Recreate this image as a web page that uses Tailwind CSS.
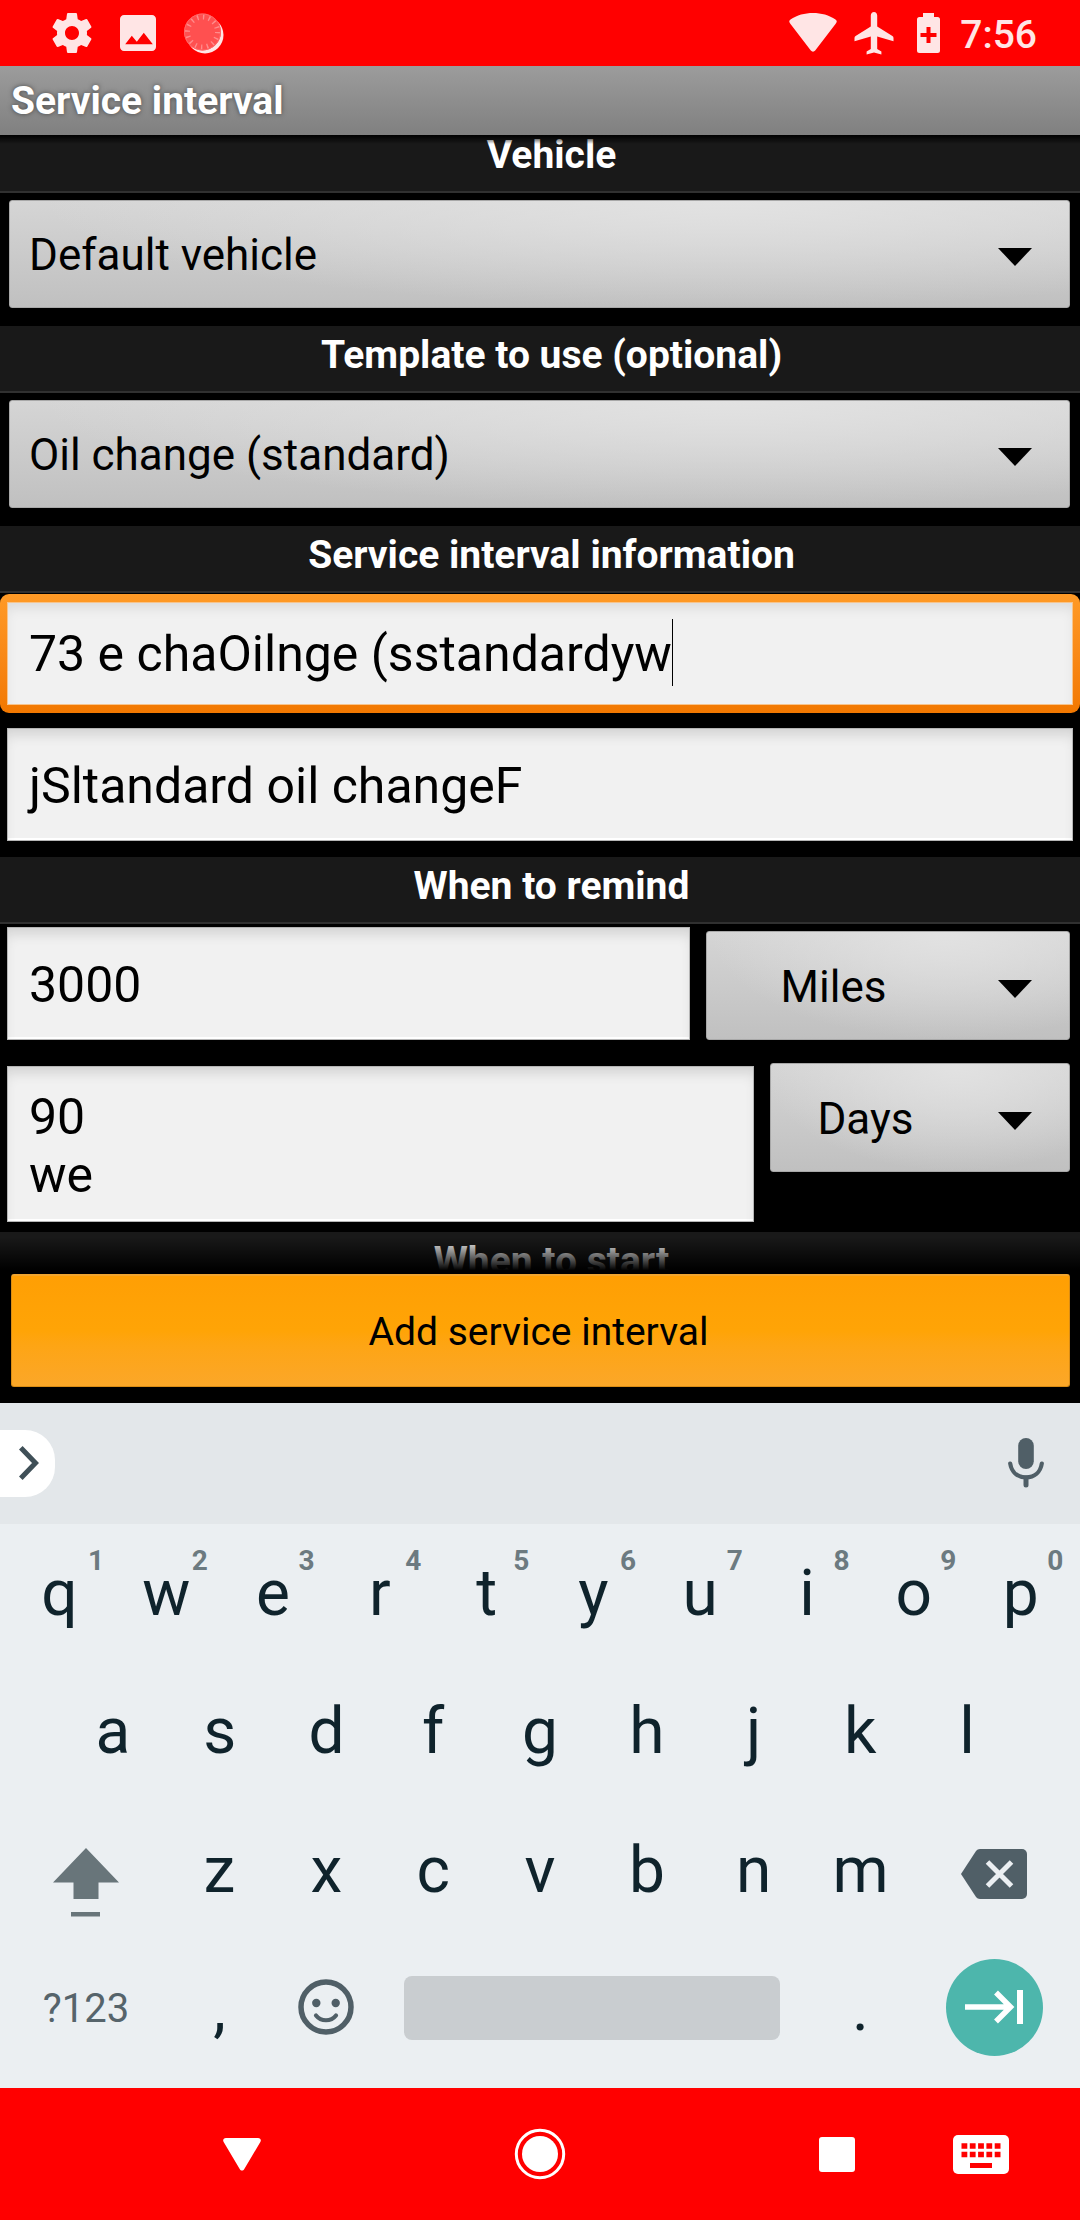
<!DOCTYPE html>
<html lang="en">
<head>
<meta charset="utf-8">
<title>Service interval</title>
<script src="https://cdn.jsdelivr.net/npm/@tailwindcss/browser@4"></script>
</head>
<body class="w-[1080px] h-[2220px] overflow-hidden bg-black font-[Roboto,sans-serif] flex flex-col">

<!-- Status bar -->
<header class="h-[66px] shrink-0 bg-[#ff0000] flex items-center text-[#ffe5e5]">
  <svg class="ml-[48px] w-12 h-12 shrink-0" viewBox="0 0 24 24" fill="currentColor"><path d="M19.43 12.98c.04-.32.07-.64.07-.98s-.03-.66-.07-.98l2.11-1.65c.19-.15.24-.42.12-.64l-2-3.46c-.12-.22-.39-.3-.61-.22l-2.49 1c-.52-.4-1.08-.73-1.69-.98l-.38-2.65C14.46 2.18 14.25 2 14 2h-4c-.25 0-.46.18-.49.42l-.38 2.65c-.61.25-1.17.59-1.69.98l-2.49-1c-.23-.09-.49 0-.61.22l-2 3.46c-.13.22-.07.49.12.64l2.11 1.65c-.04.32-.07.65-.07.98s.03.66.07.98l-2.11 1.65c-.19.15-.24.42-.12.64l2 3.46c.12.22.39.3.61.22l2.49-1c.52.4 1.08.73 1.69.98l.38 2.65c.03.24.24.42.49.42h4c.25 0 .46-.18.49-.42l.38-2.65c.61-.25 1.17-.59 1.69-.98l2.49 1c.23.09.49 0 .61-.22l2-3.46c.12-.22.07-.49-.12-.64l-2.11-1.65zM12 15.5c-1.93 0-3.5-1.57-3.5-3.5s1.57-3.5 3.5-3.5 3.5 1.57 3.5 3.5-1.57 3.5-3.5 3.5z"/></svg>
  <svg class="ml-[18px] w-12 h-12 shrink-0" viewBox="0 0 24 24" fill="currentColor"><path d="M21 19V5c0-1.1-.9-2-2-2H5c-1.1 0-2 .9-2 2v14c0 1.100.9 2 2 2h14c1.100 0 2-.9 2-2zM5.600 17.600l3.300-4.200 2.500 3 3.500-4.500 4.500 5.700z"/></svg>
  <svg class="ml-[18px] w-12 h-12 shrink-0" viewBox="0 0 48 48"><circle cx="25" cy="26" r="18.500" fill="#ffe5e5"/><circle cx="22.500" cy="23" r="18.500" fill="#ff5050"/><circle cx="22.500" cy="23" r="15" fill="none" stroke="#ff8c8c" stroke-width="5" stroke-dasharray="1.400 4.490"/><circle cx="22.500" cy="23" r="18" fill="none" stroke="#ff6868" stroke-width="1"/></svg>
  <svg class="ml-auto w-12 h-[42px] shrink-0" viewBox="0 0 48 42" fill="currentColor"><path d="M1.500 12C-.2 10-.2 8.500 1.500 7.400 14-1.200 34-1.200 46.500 7.400c1.700 1.100 1.700 2.600 0 4.600L26.200 38.500c-1.200 1.500-3.200 1.500-4.400 0z"/></svg>
  <svg class="ml-[17px] w-[40px] h-[44px] shrink-0" viewBox="0 0 40 44" fill="currentColor"><path d="M20 1c1.900 0 3.200 1.500 3.200 3.600V15.500l15.200 9.600c.7.400 1.100 1.100 1.100 1.900v3.300l-16.300-4.700V38l4.200 2.600v2.900L20 41.500l-7.400 2v-2.900l4.200-2.600V25.600L.5 30.300V27c0-.8.400-1.500 1.100-1.900l15.200-9.600V4.600C16.800 2.500 18.100 1 20 1z"/></svg>
  <svg class="ml-[23px] w-[23px] h-[40px] shrink-0" viewBox="0 0 23 40"><path fill="currentColor" d="M6 0h11v4h3.500A2.500 2.500 0 0 1 23 6.500v31a2.500 2.500 0 0 1-2.500 2.500h-18A2.500 2.500 0 0 1 0 37.500v-31A2.500 2.500 0 0 1 2.500 4H6z"/><path stroke="#f00" stroke-width="4" d="M11.500 14v16M3.500 22h16"/></svg>
  <span class="ml-[20px] mr-[43px] mt-[4px] text-[39px] leading-none font-medium">7:56</span>
</header>

<!-- Title bar -->
<div class="h-[69px] shrink-0 bg-linear-to-b from-[#9c9c9c] to-[#808080] pl-[11px]">
  <h1 class="text-white text-[39px] leading-[71px] font-bold [text-shadow:0_0_5px_rgba(0,0,0,0.5)]">Service interval</h1>
</div>

<!-- Scrolling form -->
<main class="relative h-[1137px] shrink-0 overflow-hidden">
  <div class="-mt-[9px] flex flex-col">
    <h2 class="h-[67px] bg-[#191919] border-b-2 border-[#303030] pl-[23px] text-center text-white text-[39px] leading-[59px] font-bold">Vehicle</h2>
    <div class="mt-[7px] ml-[9px] mr-[10px] h-[108px] rounded-[3px] border border-[#a8a8a8] bg-[radial-gradient(ellipse_65%_100%_at_68%_0%,#e2e2e2,transparent),linear-gradient(#d5d5d5,#c0c0c0)] flex items-center pl-[19px] pr-[37px]">
      <span class="text-[44px] leading-[108px] pt-[2px] text-black">Default vehicle</span>
      <svg class="ml-auto w-[34px] h-[18px] mt-[6px]" viewBox="0 0 34 18"><path d="M0 0h34L17 18z"/></svg>
    </div>
    <h2 class="mt-[18px] h-[67px] bg-[#191919] border-b-2 border-[#303030] pl-[23px] text-center text-white text-[39px] leading-[59px] font-bold">Template to use (optional)</h2>
    <div class="mt-[7px] ml-[9px] mr-[10px] h-[108px] rounded-[3px] border border-[#a8a8a8] bg-[radial-gradient(ellipse_65%_100%_at_68%_0%,#e2e2e2,transparent),linear-gradient(#d5d5d5,#c0c0c0)] flex items-center pl-[19px] pr-[37px]">
      <span class="text-[44px] leading-[108px] pt-[2px] text-black">Oil change (standard)</span>
      <svg class="ml-auto w-[34px] h-[18px] mt-[6px]" viewBox="0 0 34 18"><path d="M0 0h34L17 18z"/></svg>
    </div>
    <h2 class="mt-[18px] h-[67px] bg-[#191919] border-b-2 border-[#303030] pl-[23px] text-center text-white text-[39px] leading-[59px] font-bold">Service interval information</h2>
    <div class="mt-[1px] h-[119px] rounded-[9px] bg-linear-to-b from-[#ff9a26] to-[#f27800] p-[7px] pt-[8px]">
      <div class="h-[103px] bg-[#f1f1f1] border border-[#f7c48c] shadow-[inset_0_8px_14px_-4px_rgba(0,0,0,0.1)] flex items-center pl-[21px]">
        <span class="text-[50px] leading-[100px] text-black">73 e chaOilnge (sstandardyw</span><span class="-mt-[3px] w-px h-[67px] bg-black"></span>
      </div>
    </div>
    <div class="mt-[15px] mx-[7px] h-[113px] bg-[#f1f1f1] border border-[#b5b5b5] shadow-[inset_0_10px_14px_-5px_rgba(0,0,0,0.14),inset_0_-2px_0_#fff] flex items-center pl-[21px]">
      <span class="text-[50px] leading-[100px] pt-[3px] text-black">jSltandard oil changeF</span>
    </div>
    <h2 class="mt-[16px] h-[67px] bg-[#191919] border-b-2 border-[#303030] pl-[23px] text-center text-white text-[39px] leading-[59px] font-bold">When to remind</h2>
    <div class="h-[136px] pt-[3px] pl-[7px] pr-[10px] flex gap-[16px]">
      <div class="flex-1 h-[113px] bg-[#f1f1f1] border border-[#b5b5b5] shadow-[inset_0_10px_14px_-5px_rgba(0,0,0,0.14),inset_0_-2px_0_#fff] flex items-center pl-[21px]">
        <span class="text-[50px] leading-[100px] pt-[3px] text-black">3000</span>
      </div>
      <div class="mt-[4px] w-[364px] h-[109px] rounded-[3px] border border-[#a8a8a8] bg-[radial-gradient(ellipse_65%_100%_at_66%_0%,#e2e2e2,transparent),linear-gradient(#d5d5d5,#c0c0c0)] flex items-center pr-[37px]">
        <span class="flex-1 text-center text-[44px] leading-[108px] pt-[2px] text-black">Miles</span>
        <svg class="ml-[38px] w-[34px] h-[18px] mt-[6px]" viewBox="0 0 34 18"><path d="M0 0h34L17 18z"/></svg>
      </div>
    </div>
    <div class="h-[172px] pt-[3px] pl-[7px] pr-[10px] flex gap-[16px]">
      <div class="mt-[3px] flex-1 h-[156px] bg-[#f1f1f1] border border-[#b5b5b5] shadow-[inset_0_10px_14px_-5px_rgba(0,0,0,0.14),inset_0_-2px_0_#fff] pl-[21px] pt-[21px]">
        <p class="text-[50px] leading-[58px] text-black">90<br>we</p>
      </div>
      <div class="w-[300px] h-[109px] rounded-[3px] border border-[#a8a8a8] bg-[radial-gradient(ellipse_65%_100%_at_62%_0%,#e2e2e2,transparent),linear-gradient(#d5d5d5,#c0c0c0)] flex items-center pr-[37px]">
        <span class="flex-1 text-center text-[44px] leading-[108px] pt-[3px] text-black">Days</span>
        <svg class="ml-[38px] w-[34px] h-[18px] mt-[7px]" viewBox="0 0 34 18"><path d="M0 0h34L17 18z"/></svg>
      </div>
    </div>
    <h2 class="h-[67px] bg-[#191919] border-b-2 border-[#303030] pl-[23px] text-center text-white text-[39px] leading-[59px] font-bold">When to start</h2>
  </div>
  <!-- fading edges -->
  <div class="absolute inset-x-0 top-0 h-[9px] bg-linear-to-b from-black to-transparent"></div>
  <div class="absolute inset-x-0 bottom-0 h-[35px] bg-linear-to-b from-transparent to-black to-95%"></div>
</main>

<!-- Submit -->
<div class="h-[131px] shrink-0 bg-black pt-[2px] pl-[11px] pr-[10px]">
  <button class="block w-full h-[113px] rounded-[3px] border border-t-2 border-[#d98c14] border-t-[#f2a52e] bg-linear-to-b from-[#ff9f04] via-[#ffa406] to-[#fba728] text-center text-[39px] leading-[112px] pr-[4px] text-black">Add service interval</button>
</div>

<!-- Keyboard suggestion strip -->
<section class="h-[121px] shrink-0 bg-[#e3e7ea] flex items-center justify-between pb-px">
  <div class="w-[55px] h-[67px] rounded-r-[30px] bg-white flex items-center pl-[19px]">
    <svg class="w-[20px] h-[34px]" viewBox="0 0 20 34" fill="none" stroke="#3f4f57" stroke-width="5"><path d="M1.800 1.800 16.500 17 1.800 32.200"/></svg>
  </div>
  <svg class="mr-[36px] w-[36px] h-[50px]" viewBox="0 0 36 50" fill="none" stroke="#505f67" stroke-linecap="round"><rect x="10.200" y="0" width="15.600" height="31" rx="7.800" fill="#505f67" stroke="none"/><path stroke-width="4.200" d="M2.200 25.500C3.500 34 9.500 39.300 18 39.300S32.500 34 33.800 25.500"/><path stroke-width="5" d="M18 40v7"/></svg>
</section>

<!-- Keys -->
<section class="h-[564px] shrink-0 bg-[#ebeff2] pl-[6px] pr-[6px] text-[#0f232c] text-[64px] text-center">
  <div class="h-[138px] grid grid-cols-10 leading-[140px]">
    <div class="relative">q<span class="absolute left-[80px] top-[21px] w-5 text-[28px] leading-[32px] font-bold text-[#6c7a80]">1</span></div>
    <div class="relative">w<span class="absolute left-[77px] top-[21px] w-5 text-[28px] leading-[32px] font-bold text-[#6c7a80]">2</span></div>
    <div class="relative">e<span class="absolute left-[77px] top-[21px] w-5 text-[28px] leading-[32px] font-bold text-[#6c7a80]">3</span></div>
    <div class="relative">r<span class="absolute left-[77px] top-[21px] w-5 text-[28px] leading-[32px] font-bold text-[#6c7a80]">4</span></div>
    <div class="relative">t<span class="absolute left-[78px] top-[21px] w-5 text-[28px] leading-[32px] font-bold text-[#6c7a80]">5</span></div>
    <div class="relative">y<span class="absolute left-[78px] top-[21px] w-5 text-[28px] leading-[32px] font-bold text-[#6c7a80]">6</span></div>
    <div class="relative">u<span class="absolute left-[78px] top-[21px] w-5 text-[28px] leading-[32px] font-bold text-[#6c7a80]">7</span></div>
    <div class="relative">i<span class="absolute left-[78px] top-[21px] w-5 text-[28px] leading-[32px] font-bold text-[#6c7a80]">8</span></div>
    <div class="relative">o<span class="absolute left-[78px] top-[21px] w-5 text-[28px] leading-[32px] font-bold text-[#6c7a80]">9</span></div>
    <div class="relative">p<span class="absolute left-[78px] top-[21px] w-5 text-[28px] leading-[32px] font-bold text-[#6c7a80]">0</span></div>
  </div>
  <div class="h-[139px] px-[53.500px] grid grid-cols-9 leading-[140px]">
    <div>a</div><div>s</div><div>d</div><div>f</div><div>g</div><div>h</div><div>j</div><div>k</div><div>l</div>
  </div>
  <div class="h-[138px] grid grid-cols-[160px_repeat(7,1fr)_160px] leading-[140px]">
    <div class="flex justify-center pt-[47px]">
      <svg class="w-[66px] h-[69px]" viewBox="0 0 66 69" fill="#68757a"><path d="M33 0 66 34.500H45.500V51h-25V34.500H0z"/><path d="M18 64h29v4.500H18z"/></svg>
    </div>
    <div>z</div><div>x</div><div>c</div><div>v</div><div>b</div><div>n</div><div>m</div>
    <div class="flex justify-center pt-[48px]">
      <svg class="w-[66px] h-[50px]" viewBox="0 0 66 50"><path fill="#505f67" d="M19 0h42a5 5 0 0 1 5 5v40a5 5 0 0 1-5 5H19c-1.700 0-3-.7-4-2L0 25 15 2c1-1.300 2.300-2 4-2z"/><path stroke="#ebeff2" stroke-width="5" d="M26.500 13 50.500 37M50.500 13 26.500 37"/></svg>
    </div>
  </div>
  <div class="h-[138px] grid grid-cols-[160px_107px_106px_1fr_107px_160px] items-center">
    <div class="text-[40px] leading-[138px] pt-[1px] text-[#56646b]">?123</div>
    <div class="leading-[136px]">,</div>
    <svg class="w-[56px] h-[56px] mx-auto mb-[3px]" viewBox="0 0 56 56" fill="none" stroke="#505f67"><circle cx="28" cy="28" r="25" stroke-width="5.500"/><circle cx="18.300" cy="24" r="4.200" fill="#505f67" stroke="none"/><circle cx="37.700" cy="24" r="4.200" fill="#505f67" stroke="none"/><path stroke-width="4.200" stroke-linecap="round" d="M18 36.500c5 6.300 15 6.300 20 0"/></svg>
    <div class="h-[64px] ml-[25px] mr-[27px] mb-[2px] rounded-[8px] bg-[#c9cdd0]"></div>
    <div class="leading-[136px]">.</div>
    <div class="w-[97px] h-[97px] mx-auto mb-[3px] rounded-full bg-[#4db6ac] flex items-center justify-center">
      <svg class="w-[58px] h-[34px]" viewBox="0 0 58 34" fill="none" stroke="#fff"><path stroke-width="5.500" d="M0 17h45M31 2.500 45.500 17 31 31.500"/><path stroke-width="6" d="M55 0v34"/></svg>
    </div>
  </div>
</section>

<!-- Navigation bar -->
<nav class="h-[132px] shrink-0 bg-[#ff0000] flex items-center text-white">
  <svg class="ml-[223px] w-[38px] h-[33px]" viewBox="0 0 38 33" fill="currentColor"><path d="M3 0h32c2.600 0 3.600 2.200 2.200 4.200L21.300 31c-1.200 2-3.400 2-4.600 0L.8 4.200C-.6 2.200.4 0 3 0z"/></svg>
  <svg class="ml-[253px] w-[52px] h-[52px]" viewBox="0 0 52 52"><circle cx="26" cy="26" r="23.700" fill="none" stroke="#fff" stroke-width="3"/><circle cx="26" cy="26" r="18" fill="#fff"/></svg>
  <div class="ml-[253px] w-[36px] h-[35px] rounded-[3px] bg-white"></div>
  <svg class="ml-[98px] w-[56px] h-[39px]" viewBox="0 0 56 39"><rect width="56" height="39" rx="5" fill="#fff"/><path stroke="#f00" stroke-width="5.500" stroke-dasharray="5.800 2.500" d="M8.500 11h39M8.500 19.500h39"/><path stroke="#f00" stroke-width="5" d="M17 30.500h22"/></svg>
</nav>
</body>
</html>
